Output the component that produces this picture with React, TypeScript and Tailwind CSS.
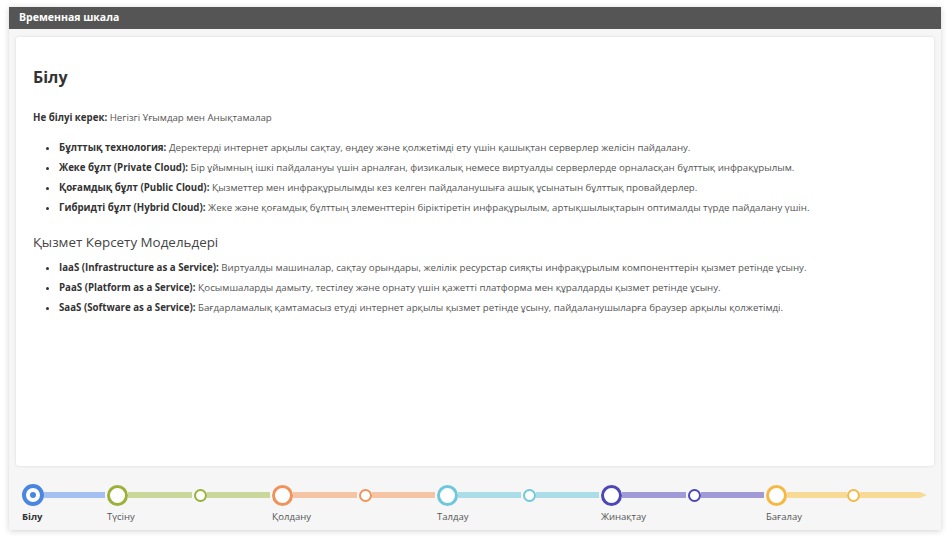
import React from 'react';

type Stage = {
  label: string;
  ring: string;
  bar: string;
  width: string;
  mid: boolean;
  active?: boolean;
  last?: boolean;
};

const stages: Stage[] = [
  { label: 'Білу', ring: 'border-[#4a86df]', bar: 'bg-[#a3c0f0]', width: 'w-[85px]', mid: false, active: true },
  { label: 'Түсіну', ring: 'border-[#9bb13c]', bar: 'bg-[#c9d79b]', width: 'w-[165px]', mid: true },
  { label: 'Қолдану', ring: 'border-[#ef935b]', bar: 'bg-[#f5c4a5]', width: 'w-[165px]', mid: true },
  { label: 'Талдау', ring: 'border-[#6ec8db]', bar: 'bg-[#abdde8]', width: 'w-[164px]', mid: true },
  { label: 'Жинақтау', ring: 'border-[#4d47b6]', bar: 'bg-[#a09bd7]', width: 'w-[165px]', mid: true },
  { label: 'Бағалау', ring: 'border-[#f4b944]', bar: 'bg-[#f7da96]', width: 'flex-1', mid: true, last: true },
];

const cloud = [
  ['Бұлттық технология:', 'Деректерді интернет арқылы сақтау, өңдеу және қолжетімді ету үшін қашықтан серверлер желісін пайдалану.'],
  ['Жеке бұлт (Private Cloud):', 'Бір ұйымның ішкі пайдалануы үшін арналған, физикалық немесе виртуалды серверлерде орналасқан бұлттық инфрақұрылым.'],
  ['Қоғамдық бұлт (Public Cloud):', 'Қызметтер мен инфрақұрылымды кез келген пайдаланушыға ашық ұсынатын бұлттық провайдерлер.'],
  ['Гибридті бұлт (Hybrid Cloud):', 'Жеке және қоғамдық бұлттың элементтерін біріктіретін инфрақұрылым, артықшылықтарын оптималды түрде пайдалану үшін.'],
];

const models = [
  ['IaaS (Infrastructure as a Service):', 'Виртуалды машиналар, сақтау орындары, желілік ресурстар сияқты инфрақұрылым компоненттерін қызмет ретінде ұсыну.'],
  ['PaaS (Platform as a Service):', 'Қосымшаларды дамыту, тестілеу және орнату үшін қажетті платформа мен құралдарды қызмет ретінде ұсыну.'],
  ['SaaS (Software as a Service):', 'Бағдарламалық қамтамасыз етуді интернет арқылы қызмет ретінде ұсыну, пайдаланушыларға браузер арқылы қолжетімді.'],
];

function Bullets({ items }: { items: string[][] }) {
  return (
    <ul className="list-disc pl-[26px] text-[9.7px] leading-[20px] text-[#555]">
      {items.map(([b, t]) => (
        <li key={b} className="marker:text-[#333]">
          <span className="font-bold text-[#333]">{b}</span> {t}
        </li>
      ))}
    </ul>
  );
}

function TimelineStage({ s }: { s: Stage }) {
  return (
    <div className={`${s.width} flex flex-col`}>
      <div className="flex items-center h-[22px]">
        {s.active ? (
          <div className={`w-[22px] h-[22px] rounded-full border-[4px] ${s.ring} bg-white flex items-center justify-center shrink-0`}>
            <div className="w-[6px] h-[6px] rounded-full bg-[#4a86df]" />
          </div>
        ) : (
          <div className={`w-[21px] h-[21px] rounded-full border-[3px] ${s.ring} bg-white shrink-0`} />
        )}
        <div className={`flex-1 h-[6px] ${s.bar} ${s.last ? '' : 'mr-[2px]'}`} />
        {s.mid && (
          <>
            <div className={`w-[13px] h-[13px] rounded-full border-2 ${s.ring} bg-white shrink-0`} />
            <div className={`flex-1 h-[6px] ${s.bar} ${s.last ? '' : 'mr-[2px]'}`} />
          </>
        )}
        {s.last && (
          <svg width="7" height="6" viewBox="0 0 7 6" className="shrink-0">
            <polygon points="0,0 7,3 0,6" fill="#f7da96" />
          </svg>
        )}
      </div>
      <div className={`mt-[4px] text-[9.5px] leading-[14px] ${s.active ? 'font-bold text-[#333]' : 'text-[#555]'}`}>
        {s.label}
      </div>
    </div>
  );
}

export default function App() {
  return (
    <div className="w-[950px] h-[543px] bg-white pt-[7px] pl-[9px] pr-[9px] pb-[13px] font-['Open_Sans',sans-serif]">
      <div className="h-full flex flex-col shadow-[0_1px_6px_rgba(0,0,0,0.18)]">
        <div className="h-[22px] bg-[#555555] flex items-center px-[10px] text-white text-[10.5px] font-bold">
          Временная шкала
        </div>
        <div className="flex-1 bg-[#f6f6f6] flex flex-col px-[7px] pt-[8px]">
          <div className="h-[429px] bg-white rounded-[3px] shadow-[0_0_3px_rgba(0,0,0,0.12)] px-[17px] pt-[27px]">
            <h1 className="text-[16px] leading-[26px] font-bold text-[#333]">Білу</h1>
            <p className="mt-[18px] text-[9.7px] leading-[20px] text-[#555]">
              <span className="font-bold text-[#333]">Не білуі керек:</span> Негізгі Ұғымдар мен Анықтамалар
            </p>
            <div className="mt-[10px]">
              <Bullets items={cloud} />
            </div>
            <h2 className="mt-[14px] text-[13.4px] leading-[20px] text-[#444]">Қызмет Көрсету Модельдері</h2>
            <div className="mt-[6px]">
              <Bullets items={models} />
            </div>
          </div>
          <div className="flex pl-[6px] pr-[7px] pt-[18px]">
            {stages.map((s) => (
              <TimelineStage key={s.label} s={s} />
            ))}
          </div>
        </div>
      </div>
    </div>
  );
}
